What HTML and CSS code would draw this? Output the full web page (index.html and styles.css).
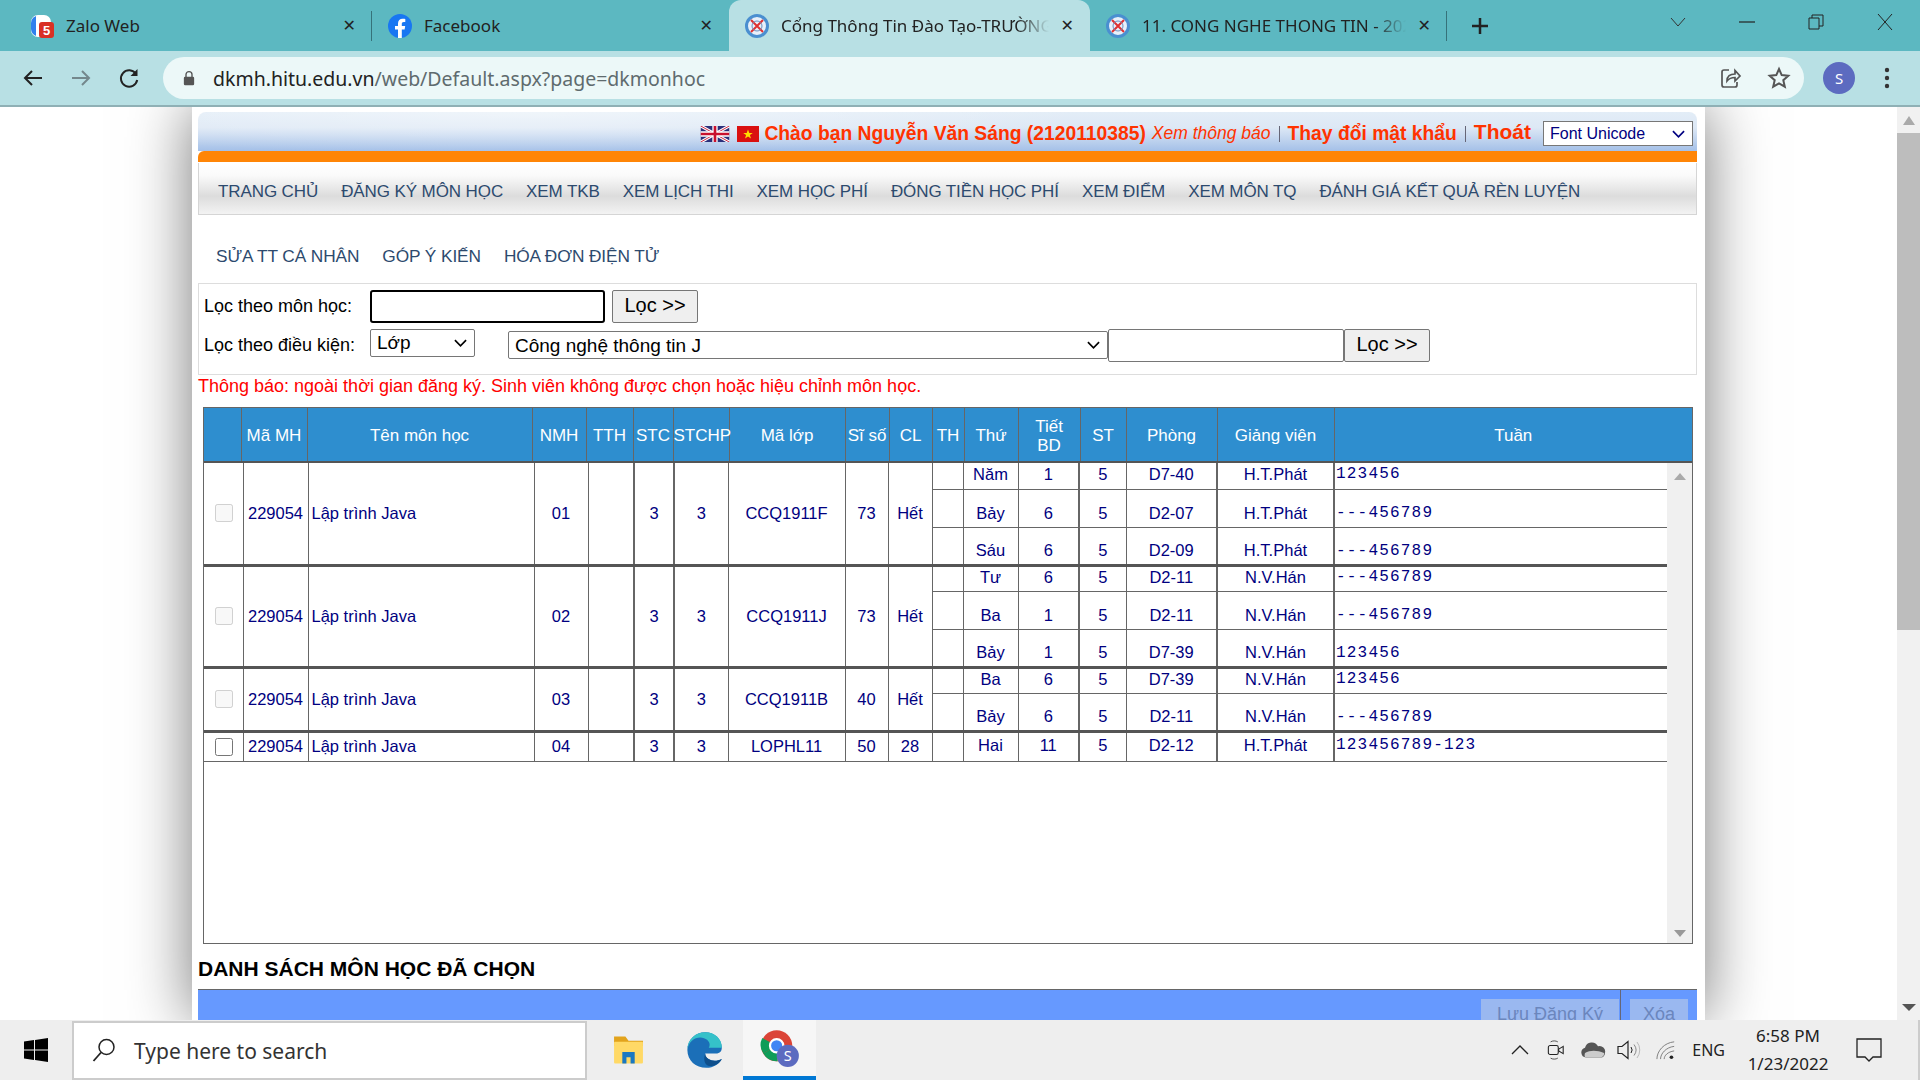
FILE: index.html
```html
<!DOCTYPE html>
<html lang="vi">
<head>
    <meta charset="UTF-8">
    <title>Cổng Thông Tin Đào Tạo</title>
    <link rel="stylesheet" href="styles.css">
</head>
<body>
    <div class="tabstrip">
        <div class="tab tab-first">
            <svg class="favicon" viewBox="0 0 24 24"><rect x="1" y="1" width="20" height="22" rx="7" fill="#fff"/><path d="M1 9a8 8 0 0 1 5-7v20a8 8 0 0 1-5-7z" fill="#2f80ed"/><rect x="9" y="8" width="15" height="16" rx="3" fill="#d93025"/><text x="16.500" y="21" class="badge-num">5</text></svg>
            <span class="tab-title">Zalo Web</span>
            <span class="tab-x">✕</span>
        </div>
        <div class="tab">
            <svg class="favicon" viewBox="0 0 24 24"><circle cx="12" cy="12" r="12" fill="#1877f2"/><path d="M16.600 15.500l.6-3.500h-3.400V9.800c0-1 .5-1.900 2-1.900h1.500V4.900s-1.400-.2-2.700-.2c-2.800 0-4.600 1.700-4.600 4.700V12H7v3.500h3V24h3.800v-8.500z" fill="#fff"/></svg>
            <span class="tab-title">Facebook</span>
            <span class="tab-x">✕</span>
        </div>
        <div class="tab tab-active">
            <svg class="favicon" viewBox="0 0 24 24"><circle cx="12" cy="12" r="10.500" fill="#e8f0fa" stroke="#4a8fd0" stroke-width="3"/><path d="M6 6l12 12M18 6L6 18" stroke="#e03030" stroke-width="2"/><circle cx="12" cy="12" r="5" fill="none" stroke="#6a8fc0"/></svg>
            <span class="tab-title tab-fade">Cổng Thông Tin Đào Tạo-TRƯỜNG</span>
            <span class="tab-x">✕</span>
        </div>
        <div class="tab tab-last">
            <svg class="favicon" viewBox="0 0 24 24"><circle cx="12" cy="12" r="10.500" fill="#e8f0fa" stroke="#4a8fd0" stroke-width="3"/><path d="M6 6l12 12M18 6L6 18" stroke="#e03030" stroke-width="2"/><circle cx="12" cy="12" r="5" fill="none" stroke="#6a8fc0"/></svg>
            <span class="tab-title tab-fade">11. CONG NGHE THONG TIN - 2021</span>
            <span class="tab-x">✕</span>
        </div>
        <svg class="new-tab" viewBox="0 0 20 20"><path d="M10 2v16M2 10h16" stroke="#222" stroke-width="2.500"/></svg>
        <div class="window-btns">
            <svg viewBox="0 0 16 16"><path d="M1 4l7 8 7-8" fill="none" stroke="#333"/></svg>
            <svg viewBox="0 0 16 16"><path d="M0 8h16" stroke="#222" stroke-width="1.200"/></svg>
            <svg viewBox="0 0 16 16"><path d="M1 4h10v11H1zM4 4V1h11v11h-4" fill="none" stroke="#222"/></svg>
            <svg viewBox="0 0 16 16"><path d="M1 0l14 16M15 0L1 16" stroke="#222"/></svg>
        </div>
    </div>

    <div class="toolbar">
        <svg class="tool-icon" viewBox="0 0 24 24"><path d="M21 12H4M11 5l-7 7 7 7" fill="none" stroke="#222" stroke-width="2"/></svg>
        <svg class="tool-icon" viewBox="0 0 24 24"><path d="M3 12h17M13 5l7 7-7 7" fill="none" stroke="#74888c" stroke-width="2"/></svg>
        <svg class="tool-icon" viewBox="0 0 24 24"><path d="M19 8a8.200 8.200 0 1 0 1.200 6" fill="none" stroke="#222" stroke-width="2"/><path d="M20.500 3v7h-7z" fill="#222"/></svg>
        <div class="omnibox">
            <svg class="lock" viewBox="0 0 14 18"><path d="M3.500 8V5a3.500 3.500 0 0 1 7 0v3" fill="none" stroke="#555" stroke-width="1.600"/><rect x="1" y="7.500" width="12" height="10" rx="1.500" fill="#555"/></svg>
            <span class="url"><span class="url-host">dkmh.hitu.edu.vn</span>/web/Default.aspx?page=dkmonhoc</span>
            <svg class="omni-icon share" viewBox="0 0 24 24"><path d="M11 4H6a2 2 0 0 0-2 2v13a2 2 0 0 0 2 2h11a2 2 0 0 0 2-2v-3" fill="none" stroke="#555" stroke-width="1.700"/><path d="M9 15c0-5 3-7 8-7V4.500l5 5.500-5 5v-3.500c-3 0-6 1-8 3.500z" fill="none" stroke="#555" stroke-width="1.700"/></svg>
            <svg class="omni-icon" viewBox="0 0 24 24"><path d="M12 3l2.700 6.100 6.600.7-5 4.400 1.500 6.500-5.800-3.400-5.800 3.400 1.500-6.500-5-4.400 6.600-.7z" fill="none" stroke="#555" stroke-width="2"/></svg>
        </div>
        <span class="avatar">S</span>
        <svg class="dots" viewBox="0 0 6 22"><circle cx="3" cy="3" r="2.200" fill="#333"/><circle cx="3" cy="11" r="2.200" fill="#333"/><circle cx="3" cy="19" r="2.200" fill="#333"/></svg>
    </div>

    <div class="viewport">
        <div class="page">
            <div class="banner">
                <svg class="flag" viewBox="0 0 32 18"><rect width="32" height="18" fill="#2b2f7a"/><path d="M0 0l32 18M32 0L0 18" stroke="#fff" stroke-width="3.500"/><path d="M0 0l32 18M32 0L0 18" stroke="#c8102e"/><path d="M16 0v18M0 9h32" stroke="#fff" stroke-width="6"/><path d="M16 0v18M0 9h32" stroke="#c8102e" stroke-width="3"/></svg>
                <svg class="flag flag-vn" viewBox="0 0 22 16"><rect width="22" height="16" fill="#da1010"/><path d="M11 3.500l1.300 3.500h3.500l-2.900 2.100 1.100 3.500-3-2.200-3 2.200 1.100-3.500L6.200 7h3.500z" fill="#ffdd00"/></svg>
                <span class="hello">Chào bạn Nguyễn Văn Sáng (2120110385)</span>
                <span class="notice-link">Xem thông báo</span>
                <span class="sep"></span>
                <span class="hello">Thay đổi mật khẩu</span>
                <span class="sep"></span>
                <span class="logout">Thoát</span>
                <select class="font-select"><option>Font Unicode</option></select>
            </div>
            <div class="orange-bar"></div>
            <div class="menu">
                <a>TRANG CHỦ</a><a>ĐĂNG KÝ MÔN HỌC</a><a>XEM TKB</a><a>XEM LỊCH THI</a><a>XEM HỌC PHÍ</a><a>ĐÓNG TIỀN HỌC PHÍ</a><a>XEM ĐIỂM</a><a>XEM MÔN TQ</a><a>ĐÁNH GIÁ KẾT QUẢ RÈN LUYỆN</a>
            </div>
            <div class="menu-plain">
                <a>SỬA TT CÁ NHÂN</a><a>GÓP Ý KIẾN</a><a>HÓA ĐƠN ĐIỆN TỬ</a>
            </div>

            <div class="filter">
                <div class="filter-row">
                    <label>Lọc theo môn học:</label>
                    <input type="text" class="input-focus">
                    <button class="btn-filter">Lọc &gt;&gt;</button>
                </div>
                <div class="filter-row filter-row-2">
                    <label>Lọc theo điều kiện:</label>
                    <select class="select-type"><option>Lớp</option></select>
                    <select class="select-major"><option>Công nghệ thông tin J</option></select>
                    <input type="text" class="input-plain">
                    <button class="btn-filter btn-filter-2">Lọc &gt;&gt;</button>
                </div>
            </div>

            <p class="error-msg">Thông báo: ngoài thời gian đăng ký. Sinh viên không được chọn hoặc hiệu chỉnh môn học.</p>

            <div class="table-box">
                <table class="head-table">
                    <colgroup>
                        <col class="hc1"><col class="hc2"><col class="hc3"><col class="hc4"><col class="hc5"><col class="hc6"><col class="hc7"><col class="hc8"><col class="hc9"><col class="hc10"><col class="hc11"><col class="hc12"><col class="hc13"><col class="hc14"><col class="hc15"><col class="hc16"><col class="hc17">
                    </colgroup>
                    <tr>
                        <th></th><th>Mã MH</th><th>Tên môn học</th><th>NMH</th><th>TTH</th><th>STC</th><th>STCHP</th><th>Mã lớp</th><th>Sĩ số</th><th>CL</th><th>TH</th><th>Thứ</th><th class="th-wrap">Tiết<br>BD</th><th>ST</th><th>Phòng</th><th>Giảng viên</th><th>Tuần</th>
                    </tr>
                </table>
                <div class="list-area">
                    <div class="list-scroll">
                        <table class="body-table">
                            <colgroup>
                                <col class="bc1"><col class="bc2"><col class="bc3"><col class="bc4"><col class="bc5"><col class="bc6"><col class="bc7"><col class="bc8"><col class="bc9"><col class="bc10"><col class="bc11"><col class="bc12"><col class="bc13"><col class="bc14"><col class="bc15"><col class="bc16"><col class="bc17">
                            </colgroup>
                            <tr class="row-s">
                                <td rowspan="3"><input type="checkbox" disabled></td><td rowspan="3">229054</td><td rowspan="3" class="left">Lập trình Java</td><td rowspan="3">01</td><td rowspan="3"></td><td rowspan="3">3</td><td rowspan="3">3</td><td rowspan="3">CCQ1911F</td><td rowspan="3">73</td><td rowspan="3">Hết</td>
                                <td></td><td class="sub">Năm</td><td class="sub">1</td><td class="sub">5</td><td class="sub">D7-40</td><td class="sub">H.T.Phát</td><td class="weeks">123456</td>
                            </tr>
                            <tr class="row-l"><td></td><td class="sub">Bảy</td><td class="sub">6</td><td class="sub">5</td><td class="sub">D2-07</td><td class="sub">H.T.Phát</td><td class="weeks">---456789</td></tr>
                            <tr class="row-l"><td></td><td class="sub">Sáu</td><td class="sub">6</td><td class="sub">5</td><td class="sub">D2-09</td><td class="sub">H.T.Phát</td><td class="weeks">---456789</td></tr>
                            <tr class="row-s group">
                                <td rowspan="3"><input type="checkbox" disabled></td><td rowspan="3">229054</td><td rowspan="3" class="left">Lập trình Java</td><td rowspan="3">02</td><td rowspan="3"></td><td rowspan="3">3</td><td rowspan="3">3</td><td rowspan="3">CCQ1911J</td><td rowspan="3">73</td><td rowspan="3">Hết</td>
                                <td></td><td class="sub">Tư</td><td class="sub">6</td><td class="sub">5</td><td class="sub">D2-11</td><td class="sub">N.V.Hán</td><td class="weeks">---456789</td>
                            </tr>
                            <tr class="row-l"><td></td><td class="sub">Ba</td><td class="sub">1</td><td class="sub">5</td><td class="sub">D2-11</td><td class="sub">N.V.Hán</td><td class="weeks">---456789</td></tr>
                            <tr class="row-l"><td></td><td class="sub">Bảy</td><td class="sub">1</td><td class="sub">5</td><td class="sub">D7-39</td><td class="sub">N.V.Hán</td><td class="weeks">123456</td></tr>
                            <tr class="row-s group">
                                <td rowspan="2"><input type="checkbox" disabled></td><td rowspan="2">229054</td><td rowspan="2" class="left">Lập trình Java</td><td rowspan="2">03</td><td rowspan="2"></td><td rowspan="2">3</td><td rowspan="2">3</td><td rowspan="2">CCQ1911B</td><td rowspan="2">40</td><td rowspan="2">Hết</td>
                                <td></td><td class="sub">Ba</td><td class="sub">6</td><td class="sub">5</td><td class="sub">D7-39</td><td class="sub">N.V.Hán</td><td class="weeks">123456</td>
                            </tr>
                            <tr class="row-l"><td></td><td class="sub">Bảy</td><td class="sub">6</td><td class="sub">5</td><td class="sub">D2-11</td><td class="sub">N.V.Hán</td><td class="weeks">---456789</td></tr>
                            <tr class="row-x group">
                                <td><input type="checkbox"></td><td>229054</td><td class="left">Lập trình Java</td><td>04</td><td></td><td>3</td><td>3</td><td>LOPHL11</td><td>50</td><td>28</td>
                                <td></td><td class="sub">Hai</td><td class="sub">11</td><td class="sub">5</td><td class="sub">D2-12</td><td class="sub">H.T.Phát</td><td class="weeks">123456789-123</td>
                            </tr>
                        </table>
                    </div>
                    <div class="list-scrollbar">
                        <span class="arrow-up"></span>
                        <span class="arrow-down"></span>
                    </div>
                </div>
            </div>

            <h2 class="chosen-title">DANH SÁCH MÔN HỌC ĐÃ CHỌN</h2>
            <div class="chosen-bar">
                <button class="btn-disabled" disabled>Lưu Đăng Ký</button>
                <span class="bar-sep"></span>
                <button class="btn-disabled btn-del" disabled>Xóa</button>
            </div>
        </div>
        <div class="page-scrollbar">
            <span class="page-arrow-up"></span>
            <span class="page-thumb"></span>
            <span class="page-arrow-down"></span>
        </div>
    </div>

    <div class="taskbar">
        <svg class="win-logo" viewBox="0 0 24 24"><path d="M0 3.500l10-1.400V11.500H0zM11 2l13-2v11.500H11zM0 12.500h10v9.400L0 20.500zM11 12.500h13V24l-13-2z" fill="#000"/></svg>
        <div class="searchbox">
            <svg class="search-icon" viewBox="0 0 24 24"><circle cx="14.500" cy="9" r="7.500" fill="none" stroke="#222" stroke-width="1.500"/><path d="M9 14.500L1.500 23" stroke="#222" stroke-width="1.800"/></svg>
            <span>Type here to search</span>
        </div>
        <div class="pinned">
            <svg class="pin-folder" viewBox="0 0 32 32"><path d="M2 3h11l3 4h14v5H2z" fill="#e2a31c"/><rect x="2" y="8" width="28" height="21" rx="1" fill="#ffd966"/><path d="M10 29V18h12v11h-4v-6h-4v6z" fill="#1a78c2"/></svg>
            <svg class="pin-edge" viewBox="0 0 32 32"><path d="M2 16C2 7 9 1 17 1c8 0 14 6 14 13 0 4-3 5-6 5h-8c0 4 4 6 8 6 2 0 4-.5 6-1.500-2 4-7 7.500-13 7.500C9 31 2 25 2 16z" fill="#1b6fb8"/><path d="M2 16C3 8 10 4 16 6c4 1.200 6 5 4 8h11C31 6 25 1 17 1 9 1 2 7 2 16z" fill="#35c1c9"/><path d="M17 19c0 4 4 6 8 6 2 0 4-.5 6-1.500-2 4-6 6-10 6-4 0-6-5-4-10.500z" fill="#0e4f8c"/></svg>
            <div class="pinned-active">
                <svg viewBox="0 0 36 36"><circle cx="15" cy="16" r="14" fill="#db4437"/><path d="M15 16L3 23a14 14 0 0 0 13 7z" fill="#0f9d58"/><path d="M3 23a14 14 0 0 1-1-14l13 7z" fill="#0f9d58"/><path d="M15 16h14a14 14 0 0 1-13 14z" fill="#ffcd40"/><circle cx="15" cy="16" r="6" fill="#4285f4" stroke="#fff" stroke-width="2"/><circle cx="25" cy="25" r="10" fill="#5c6bc0"/><text x="25" y="30" class="chrome-badge">S</text></svg>
            </div>
        </div>
        <div class="tray">
            <svg class="tray-chevron" viewBox="0 0 20 12"><path d="M2 10l8-8 8 8" fill="none" stroke="#222" stroke-width="1.300"/></svg>
            <svg class="tray-meet" viewBox="0 0 20 24"><rect x="1.500" y="7" width="11" height="10" rx="2" fill="none" stroke="#222" stroke-width="1.200"/><path d="M13 11l5-3v8l-5-3z" fill="none" stroke="#222" stroke-width="1.200"/><path d="M4 3c2-1.500 6-1.500 8 0M4 21c2 1.500 6 1.500 8 0" fill="none" stroke="#444"/></svg>
            <svg class="tray-cloud" viewBox="0 0 26 16"><path d="M6 15.500a5 5 0 0 1-1-9.800 7 7 0 0 1 13-1.500 5.500 5.500 0 0 1 7 6.500c0 3-2 4.800-4 4.800z" fill="#555"/><path d="M5 11c5-3 12-3 19 0 .5 2-1 4.500-4 4.500H6c-1 0-2-1-1-4.500z" fill="#ccc"/></svg>
            <svg class="tray-sound" viewBox="0 0 24 22"><path d="M1 7.500h4l6-5v17l-6-5H1z" fill="none" stroke="#222" stroke-width="1.200"/><path d="M14 8a5 5 0 0 1 0 6" fill="none" stroke="#222"/><path d="M17 5.500a9 9 0 0 1 0 11" fill="none" stroke="#888"/><path d="M20 3a13 13 0 0 1 0 16" fill="none" stroke="#bbb"/></svg>
            <svg class="tray-wifi" viewBox="0 0 22 22"><path d="M1 21C1 12 9 3 20 2M5 21c0-6 6-13 15-14M9 21c0-4 4-8 11-9" fill="none" stroke="#777"/><circle cx="17" cy="19" r="2" fill="#222"/></svg>
            <span class="tray-lang">ENG</span>
            <div class="clock"><span>6:58 PM</span><span>1/23/2022</span></div>
            <svg class="tray-notify" viewBox="0 0 26 24"><path d="M1 1h24v18h-8l-4 4-4-4H1z" fill="none" stroke="#222" stroke-width="1.300"/></svg>
        </div>
    </div>
</body>
</html>
```
FILE: styles.css
```css
* {
    margin: 0;
    padding: 0;
    box-sizing: border-box;
}

html, body {
    height: 100%;
    overflow: hidden;
}

body {
    display: flex;
    flex-direction: column;
    font-family: "Liberation Sans", Arial, sans-serif;
    font-size: 16px;
    background: #fff;
}

/* browser chrome */
.tabstrip {
    height: 51px;
    flex-shrink: 0;
    background: #5cb8c1;
    display: flex;
    align-items: stretch;
    padding-left: 14px;
    font-family: "Noto Sans", sans-serif;
}

.tab {
    width: 357px;
    padding: 0 16px;
    display: flex;
    align-items: center;
    gap: 12px;
    position: relative;
    color: #222;
    font-size: 17px;
}

.tab-first {
    width: 358px;
}

.tab-first::after,
.tab-last::after {
    content: "";
    position: absolute;
    right: 0;
    top: 11px;
    height: 30px;
    width: 1px;
    background: #36727a;
}

.tab-active {
    background: #b8e0e4;
    border-radius: 12px 12px 0 0;
    width: 361px;
}

.favicon {
    width: 24px;
    height: 24px;
    flex-shrink: 0;
}

.badge-num {
    font: bold 13px "Liberation Sans", sans-serif;
    fill: #fff;
    text-anchor: middle;
}

.tab-title {
    flex: 1;
    white-space: nowrap;
    overflow: hidden;
}

.tab-fade {
    -webkit-mask-image: linear-gradient(to right, #000 88%, transparent);
    mask-image: linear-gradient(to right, #000 88%, transparent);
}

.tab-x {
    font-size: 16px;
    font-weight: bold;
    font-family: "DejaVu Sans", sans-serif;
}

.new-tab {
    width: 20px;
    height: 20px;
    margin: 16px 0 0 23px;
}

.window-btns {
    margin-left: auto;
    display: flex;
    gap: 53px;
    padding: 14px 27px 0 0;
}

.window-btns svg {
    width: 16px;
    height: 16px;
}

.toolbar {
    height: 56px;
    flex-shrink: 0;
    background: #b8e0e4;
    border-bottom: 2px solid #8fb0b5;
    display: flex;
    align-items: flex-start;
    padding: 6px 0 0 21px;
}

.tool-icon {
    width: 24px;
    height: 24px;
    margin: 9px 24px 0 0;
}

.omnibox {
    width: 1641px;
    height: 42px;
    margin-left: -2px;
    border-radius: 21px;
    background: #ecf8f8;
    display: flex;
    align-items: center;
    padding-left: 20px;
}

.lock {
    width: 12px;
    height: 16px;
    margin-right: 18px;
}

.url {
    flex: 1;
    font-family: "Noto Sans", sans-serif;
    font-size: 19.500px;
    color: #5f6b6e;
}

.url-host {
    color: #222;
}

.omni-icon {
    width: 24px;
    height: 24px;
    margin-right: 13px;
}

.omni-icon.share {
    margin-right: 25px;
}

.avatar {
    width: 32px;
    height: 32px;
    border-radius: 50%;
    background: #5c6bc0;
    color: #fff;
    text-align: center;
    line-height: 32px;
    font-size: 15px;
    margin: 5px 0 0 19px;
    font-family: "Noto Sans", sans-serif;
}

.dots {
    width: 6px;
    height: 22px;
    margin: 10px 0 0 29px;
}

/* page area */
.viewport {
    flex: 1;
    min-height: 0;
    display: flex;
    overflow: hidden;
}

.page {
    width: 1513px;
    margin: 0 auto;
    padding: 5px 8px 0 6px;
    background: #fff;
    box-shadow: 0 0 60px #777;
    flex-shrink: 0;
    overflow: hidden;
}

.page-scrollbar {
    width: 23px;
    flex-shrink: 0;
    background: #f1f1f1;
    display: flex;
    flex-direction: column;
    align-items: center;
    position: relative;
}

.page-arrow-up {
    margin-top: 9px;
    border: 6px solid transparent;
    border-top: 0;
    border-bottom: 9px solid #aaa;
}

.page-thumb {
    width: 23px;
    height: 497px;
    margin-top: 8px;
    background: #bdbdbd;
}

.page-arrow-down {
    margin-top: auto;
    margin-bottom: 9px;
    border: 7px solid transparent;
    border-bottom: 0;
    border-top: 7px solid #555;
}

.banner {
    height: 39px;
    display: flex;
    align-items: center;
    justify-content: flex-end;
    padding: 4px 4px 0 0;
    border-radius: 8px 8px 0 0;
    background:
        radial-gradient(ellipse 560px 42px at 22% 0, rgba(255, 255, 255, 0.45), transparent),
        linear-gradient(to bottom, #e3edf7, #dde8f5 40%, #a4c0e8);
}

.flag {
    width: 32px;
    height: 16px;
    margin-right: 6px;
}

.flag-vn {
    width: 22px;
    margin-right: 5px;
}

.hello {
    font-weight: bold;
    font-size: 19.300px;
    color: #ff3300;
}

.notice-link {
    font-style: italic;
    font-size: 17.500px;
    color: #ff3300;
    margin-left: 6px;
}

.sep {
    width: 1px;
    height: 16px;
    background: #667;
    margin: 0 8px;
}

.logout {
    font-weight: bold;
    font-size: 21px;
    color: #ff3300;
    margin-bottom: 3px;
}

.font-select {
    appearance: none;
    width: 150px;
    height: 25px;
    margin-left: 12px;
    padding-left: 6px;
    font: 16px "Liberation Sans", sans-serif;
    color: #000080;
    background: #fff url("data:image/svg+xml,%3Csvg xmlns='http://www.w3.org/2000/svg' viewBox='0 0 14 8'%3E%3Cpath d='M1 1l6 6 6-6' fill='none' stroke='%23000080' stroke-width='1.800'/%3E%3C/svg%3E") no-repeat right 7px center / 13px 8px;
    border: 1px solid #777;
}

.orange-bar {
    height: 11px;
    background: #ff8506;
    border-radius: 6px 0 0 0;
}

.menu {
    height: 52px;
    margin-top: 1px;
    display: flex;
    align-items: center;
    gap: 23px;
    padding: 6px 0 0 19px;
    border: 1px solid #d5d5d5;
    border-top: 0;
    background: linear-gradient(to bottom, #fff, #fafafa 25%, #dcdcdc 65%, #f3f3f3);
}

.menu a,
.menu-plain a {
    font-size: 17px;
    color: #2d4a6e;
    letter-spacing: -0.100px;
}

.menu-plain {
    height: 68px;
    display: flex;
    align-items: center;
    gap: 23px;
    padding: 14px 0 0 18px;
}

.menu-plain a {
    font-size: 17.300px;
}

.filter {
    height: 92px;
    padding: 5px 0 0 5px;
    border: 1px solid #ddd;
}

.filter-row {
    display: flex;
    align-items: center;
    height: 34px;
}

.filter-row label {
    width: 166px;
    color: #000;
    font-size: 18px;
    white-space: nowrap;
}

.filter-row-2 {
    margin-top: 5px;
}

input[type="text"] {
    background: #fff;
}

.input-focus {
    width: 235px;
    height: 33px;
    border: 2px solid #000;
    border-radius: 3px;
}

.btn-filter {
    width: 86px;
    height: 33px;
    margin-left: 7px;
    padding-bottom: 2px;
    font: 20px "Liberation Sans", sans-serif;
    color: #000;
    background: #efefef;
    border: 1px solid #767676;
    border-radius: 2px;
}

.btn-filter-2 {
    margin-left: 0;
}

.select-type,
.select-major {
    appearance: none;
    height: 28px;
    padding-left: 6px;
    font: 19px "Liberation Sans", sans-serif;
    color: #000;
    background: #fff url("data:image/svg+xml,%3Csvg xmlns='http://www.w3.org/2000/svg' viewBox='0 0 14 8'%3E%3Cpath d='M1 1l6 6 6-6' fill='none' stroke='%23000' stroke-width='1.800'/%3E%3C/svg%3E") no-repeat right 7px center / 13px 8px;
    border: 1px solid #767676;
    border-radius: 2px;
}

.select-type {
    width: 105px;
    margin-top: -5px;
}

.select-major {
    width: 600px;
    margin-left: 33px;
}

.input-plain {
    width: 236px;
    height: 33px;
    border: 1px solid #767676;
    border-radius: 2px;
}

.error-msg {
    height: 32px;
    line-height: 22px;
    color: #ff0000;
    font-size: 18px;
    white-space: nowrap;
}

/* course table */
.table-box {
    width: 1490px;
    height: 537px;
    margin-left: 5px;
    border: 1px solid #666;
}

.head-table,
.body-table {
    border-collapse: collapse;
    table-layout: fixed;
}

.head-table {
    width: 1488px;
    height: 55px;
    background: #2e8ecf;
}

.head-table th {
    padding-top: 2px;
    color: #fff;
    font-weight: normal;
    font-size: 17px;
    border-left: 1px solid #666;
    border-bottom: 2px solid #555;
    white-space: nowrap;
    overflow: visible;
}

.head-table th:first-child {
    border-left: 0;
}

.head-table .th-wrap {
    line-height: 19px;
}

.hc1 { width: 37px; }
.hc2 { width: 66px; }
.hc3 { width: 225px; }
.hc4 { width: 54px; }
.hc5 { width: 47px; }
.hc6 { width: 40px; }
.hc7 { width: 56px; }
.hc8 { width: 116px; }
.hc9 { width: 44px; }
.hc10 { width: 43px; }
.hc11 { width: 32px; }
.hc12 { width: 54px; }
.hc13 { width: 62px; }
.hc14 { width: 46px; }
.hc15 { width: 91px; }
.hc16 { width: 117px; }
.hc17 { width: 358px; }

.list-area {
    display: flex;
    height: 480px;
}

.list-scroll {
    width: 1463px;
    flex-shrink: 0;
    overflow: hidden;
}

.list-scrollbar {
    flex: 1;
    background: #f0f0f0;
    display: flex;
    flex-direction: column;
    align-items: center;
}

.arrow-up {
    margin-top: 10px;
    border: 6px solid transparent;
    border-top: 0;
    border-bottom: 7px solid #aaa;
}

.arrow-down {
    margin-top: auto;
    margin-bottom: 6px;
    border: 6px solid transparent;
    border-bottom: 0;
    border-top: 7px solid #999;
}

.body-table {
    width: 1463px;
}

.body-table td {
    border: 1px solid #666;
    text-align: center;
    color: #000080;
    font-size: 16.500px;
    padding: 0;
    white-space: nowrap;
}

.body-table tr:first-child td {
    border-top: 0;
}

.body-table td:first-child {
    border-left: 0;
    padding-left: 2px;
}

.body-table .left {
    text-align: left;
    padding-left: 3px;
}

.body-table .weeks {
    text-align: left;
    padding-left: 1px;
    font-family: "Liberation Mono", monospace;
    font-size: 16px;
    letter-spacing: 1.200px;
    border-right: 0;
}

.body-table .group td {
    border-top: 3px solid #555;
}

.row-s td {
    height: 26px;
}

.row-l td {
    height: 38px;
}

.row-x td {
    height: 30px;
}

.row-s .sub,
.row-s .weeks,
.row-x .sub,
.row-x .weeks {
    padding-bottom: 3px;
}

.row-l .sub,
.row-l .weeks {
    padding-top: 10px;
}

.body-table input[type="checkbox"] {
    width: 18px;
    height: 18px;
    display: block;
    margin: 0 auto;
}

.bc1 { width: 39px; }
.bc2 { width: 65px; }
.bc3 { width: 226px; }
.bc4 { width: 54px; }
.bc5 { width: 46px; }
.bc6 { width: 40px; border-left: 2px solid #666; border-right: 2px solid #666; }
.bc7 { width: 54px; }
.bc8 { width: 117px; }
.bc9 { width: 43px; }
.bc10 { width: 44px; }
.bc11 { width: 31px; }
.bc12 { width: 55px; }
.bc13 { width: 61px; }
.bc14 { width: 47px; border-left: 2px solid #666; }
.bc15 { width: 91px; }
.bc16 { width: 117px; border-left: 2px solid #666; border-right: 2px solid #666; }
.bc17 { width: 333px; }

.chosen-title {
    margin-top: 13px;
    font-size: 21px;
    line-height: 24px;
    color: #000;
}

.chosen-bar {
    height: 80px;
    margin-top: 8px;
    background: #6699ff;
    border-top: 1px solid #666;
    display: flex;
    justify-content: flex-end;
    align-items: flex-start;
    padding-right: 9px;
}

.btn-disabled {
    width: 138px;
    height: 30px;
    margin-top: 9px;
    font: 18px "Liberation Sans", sans-serif;
    color: #6b86bd;
    background: #9ab8f0;
    border: 0;
}

.btn-del {
    width: 58px;
}

.bar-sep {
    width: 1px;
    height: 40px;
    background: #667;
    margin: 0 9px 0 1px;
}

/* windows taskbar */
.taskbar {
    height: 60px;
    flex-shrink: 0;
    background: #eeeeee;
    display: flex;
    align-items: center;
    position: relative;
    z-index: 2;
    border-right: 2px solid #ccc;
    padding-right: 5px;
    font-family: "Noto Sans", sans-serif;
}

.win-logo {
    width: 24px;
    height: 24px;
    margin-left: 24px;
}

.searchbox {
    width: 515px;
    height: 59px;
    margin-left: 24px;
    background: #fff;
    border: 2px solid #ccc;
    display: flex;
    align-items: center;
    gap: 18px;
    padding-left: 18px;
    font-size: 21px;
    color: #333;
}

.searchbox span {
    padding-top: 2px;
}

.search-icon {
    width: 24px;
    height: 26px;
}

.pinned {
    display: flex;
    align-items: center;
    margin-left: 25px;
}

.pin-folder {
    width: 33px;
    height: 34px;
}

.pin-edge {
    width: 38px;
    height: 38px;
    margin-left: 40px;
}

.pinned-active {
    width: 73px;
    height: 60px;
    margin-left: 20px;
    background: #f6f6f6;
    border-bottom: 4px solid #0078d4;
    display: flex;
    align-items: center;
    justify-content: center;
}

.pinned-active svg {
    width: 40px;
    height: 40px;
}

.chrome-badge {
    font: 13px "Noto Sans", sans-serif;
    fill: #fff;
    text-anchor: middle;
}

.tray {
    margin-left: auto;
    display: flex;
    align-items: center;
}

.tray-chevron {
    width: 20px;
    height: 12px;
    margin-right: 17px;
}

.tray-meet {
    width: 18px;
    height: 24px;
    margin-right: 15px;
}

.tray-cloud {
    width: 26px;
    height: 16px;
    margin-right: 11px;
}

.tray-sound {
    width: 24px;
    height: 22px;
    margin-right: 15px;
}

.tray-wifi {
    width: 20px;
    height: 20px;
    margin-right: 16px;
}

.tray-lang {
    font-size: 16px;
    color: #222;
    margin-right: 18px;
}

.clock {
    display: flex;
    flex-direction: column;
    align-items: center;
    gap: 6px;
    width: 90px;
    font-size: 17px;
    line-height: 22px;
    color: #222;
    margin-right: 23px;
}

.tray-notify {
    width: 26px;
    height: 24px;
    margin-right: 31px;
}
```
